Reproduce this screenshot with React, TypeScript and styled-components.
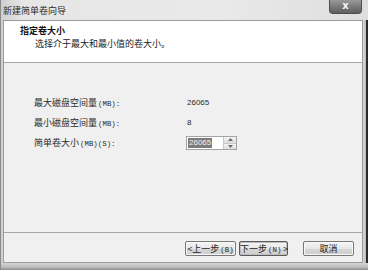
import styled, { createGlobalStyle } from "styled-components";

const GlobalStyle = createGlobalStyle`
  html, body {
    margin: 0;
    padding: 0;
    background: #3a3a3a;
  }
  body {
    font-family: "Noto Sans CJK SC", "Liberation Sans", sans-serif;
    color: #1e1e1e;
  }
`;

const sizeRows = [
  { label: "最大磁盘空间量", unit: "(MB):", value: "26065" },
  { label: "最小磁盘空间量", unit: "(MB):", value: "8" },
];

export default function App(): JSX.Element {
  return (
    <>
      <GlobalStyle />
      <Window>
        <TitleBar>
          <Title>新建简单卷向导</Title>
          <CloseButton>x</CloseButton>
        </TitleBar>
        <FrameRow>
          <Panel>
            <Header>
              <HeaderTitle>指定卷大小</HeaderTitle>
              <HeaderSub>选择介于最大和最小值的卷大小。</HeaderSub>
            </Header>
            <Body>
              <SizeGrid>
                {sizeRows.map((row) => (
                  <Row key={row.label}>
                    <Label>
                      {row.label}
                      <Unit>{row.unit}</Unit>
                    </Label>
                    <Value>{row.value}</Value>
                  </Row>
                ))}
                <Row>
                  <Label>
                    简单卷大小<Unit>(MB)(S):</Unit>
                  </Label>
                  <Spin>
                    <SpinInput>
                      <Selected>26065</Selected>
                    </SpinInput>
                    <SpinButtons>
                      <SpinArrow $up>
                        <svg width="5" height="3" viewBox="0 0 5 3">
                          <path d="M0 3 L2.5 0 L5 3 Z" fill="#6a6a6a" />
                        </svg>
                      </SpinArrow>
                      <SpinArrow>
                        <svg width="5" height="3" viewBox="0 0 5 3">
                          <path d="M0 0 L2.5 3 L5 0 Z" fill="#6a6a6a" />
                        </svg>
                      </SpinArrow>
                    </SpinButtons>
                  </Spin>
                </Row>
              </SizeGrid>
            </Body>
            <Footer>
              <Button $width={51}>
                &lt;上一步<Unit>(B)</Unit>
              </Button>
              <Button $width={49} $default>
                下一步<Unit>(N)</Unit>&nbsp;&gt;
              </Button>
              <Button $width={51} $gap={12}>
                取消
              </Button>
            </Footer>
          </Panel>
          <RightEdge />
        </FrameRow>
        <BottomEdge />
      </Window>
    </>
  );
}

const Window = styled.div`
  width: 368px;
  height: 270px;
  display: flex;
  flex-direction: column;
  background: linear-gradient(90deg, #cfcfcf 0%, #e6e6e6 6%, #e9e9e9 60%, #dedede 100%);
  border-left: 1px solid #8a8a8a;
  box-sizing: border-box;
  overflow: hidden;
`;

const TitleBar = styled.div`
  height: 20px;
  display: flex;
  align-items: flex-start;
  justify-content: space-between;
  padding-left: 2px;
`;

const Title = styled.div`
  font-size: 9px;
  line-height: 10px;
  margin-top: 6px;
  color: #2a2a2a;
`;

const CloseButton = styled.div`
  width: 33px;
  height: 14px;
  margin-right: 6px;
  box-sizing: border-box;
  border: 1px solid #4e4e4e;
  border-top: none;
  border-radius: 0 0 4px 4px;
  background: linear-gradient(180deg, #9a9a9a 0%, #7a7a7a 50%, #5e5e5e 100%);
  color: #f4f4f4;
  font-family: "DejaVu Sans", sans-serif;
  font-weight: bold;
  font-size: 10px;
  line-height: 12px;
  text-align: center;
`;

const FrameRow = styled.div`
  flex: 1;
  display: flex;
  padding-left: 2px;
`;

const Panel = styled.div`
  width: 360px;
  display: flex;
  flex-direction: column;
  border: 1px solid #9c9c9c;
  box-sizing: border-box;
  background: #f0f0f0;
`;

const RightEdge = styled.div`
  flex: 1;
  border-right: 2px solid #2a2a2a;
  background: linear-gradient(90deg, #d8d8d8, #bdbdbd);
`;

const BottomEdge = styled.div`
  height: 7px;
  background: linear-gradient(180deg, #d4d4d4 0%, #bcbcbc 60%, #8c8c8c 100%);
`;

const Header = styled.div`
  height: 42px;
  background: #ffffff;
  border-bottom: 1px solid #a6a6a6;
  box-sizing: border-box;
  padding: 3px 0 0 16px;
`;

const HeaderTitle = styled.div`
  font-size: 9px;
  line-height: 13px;
  font-weight: bold;
  color: #111;
`;

const HeaderSub = styled.div`
  font-size: 9px;
  line-height: 13px;
  padding-left: 15px;
  color: #222;
`;

const Body = styled.div`
  flex: 1;
  padding: 30px 0 0 30px;
`;

const SizeGrid = styled.div`
  display: flex;
  flex-direction: column;
`;

const Row = styled.div`
  height: 20px;
  display: grid;
  grid-template-columns: 152px auto;
  align-items: center;
`;

const Label = styled.div`
  font-size: 9px;
  line-height: 10px;
  color: #2a2a2a;
`;

const Unit = styled.span`
  font-family: "Liberation Mono", monospace;
  font-size: 7.4px;
  margin-left: 1px;
`;

const Value = styled.div`
  font-family: "Liberation Sans", sans-serif;
  font-size: 8px;
  line-height: 10px;
  padding-left: 1px;
  color: #2a2a2a;
`;

const Spin = styled.div`
  display: flex;
  height: 14px;
  width: 51px;
  box-sizing: border-box;
  border: 1px solid #a4a4a4;
  background: #ffffff;
`;

const SpinInput = styled.div`
  flex: 1;
  display: flex;
  align-items: center;
  padding-left: 1px;
`;

const Selected = styled.span`
  font-family: "Liberation Sans", sans-serif;
  font-size: 8px;
  line-height: 10px;
  background: #7c7c7c;
  color: #f2f2f2;
  padding: 0 1px;
`;

const SpinButtons = styled.div`
  width: 12px;
  display: flex;
  flex-direction: column;
  border-left: 1px solid #c8c8c8;
`;

const SpinArrow = styled.div<{ $up?: boolean }>`
  flex: 1;
  display: flex;
  align-items: center;
  justify-content: center;
  background: linear-gradient(180deg, #f4f4f4, #dcdcdc);
  border-bottom: ${(p) => (p.$up ? "1px solid #c8c8c8" : "none")};
`;

const Footer = styled.div`
  height: 30px;
  border-top: 1px solid #a6a6a6;
  display: flex;
  justify-content: flex-end;
  align-items: flex-start;
  padding: 8px 8px 0 0;
  gap: 3px;
  box-sizing: border-box;
`;

const Button = styled.div<{ $width: number; $gap?: number; $default?: boolean }>`
  width: ${(p) => p.$width}px;
  height: 15px;
  margin-left: ${(p) => p.$gap ?? 0}px;
  box-sizing: border-box;
  border: 1px solid ${(p) => (p.$default ? "#5a5a5a" : "#787878")};
  border-radius: 2px;
  background: linear-gradient(180deg, #f6f6f6 0%, #e6e6e6 50%, #d6d6d6 51%, #cfcfcf 100%);
  box-shadow: inset 0 0 0 1px ${(p) => (p.$default ? "#bcbcbc" : "#f8f8f8")};
  font-size: 9px;
  line-height: 13px;
  text-align: center;
  color: #1e1e1e;
  white-space: nowrap;
`;
